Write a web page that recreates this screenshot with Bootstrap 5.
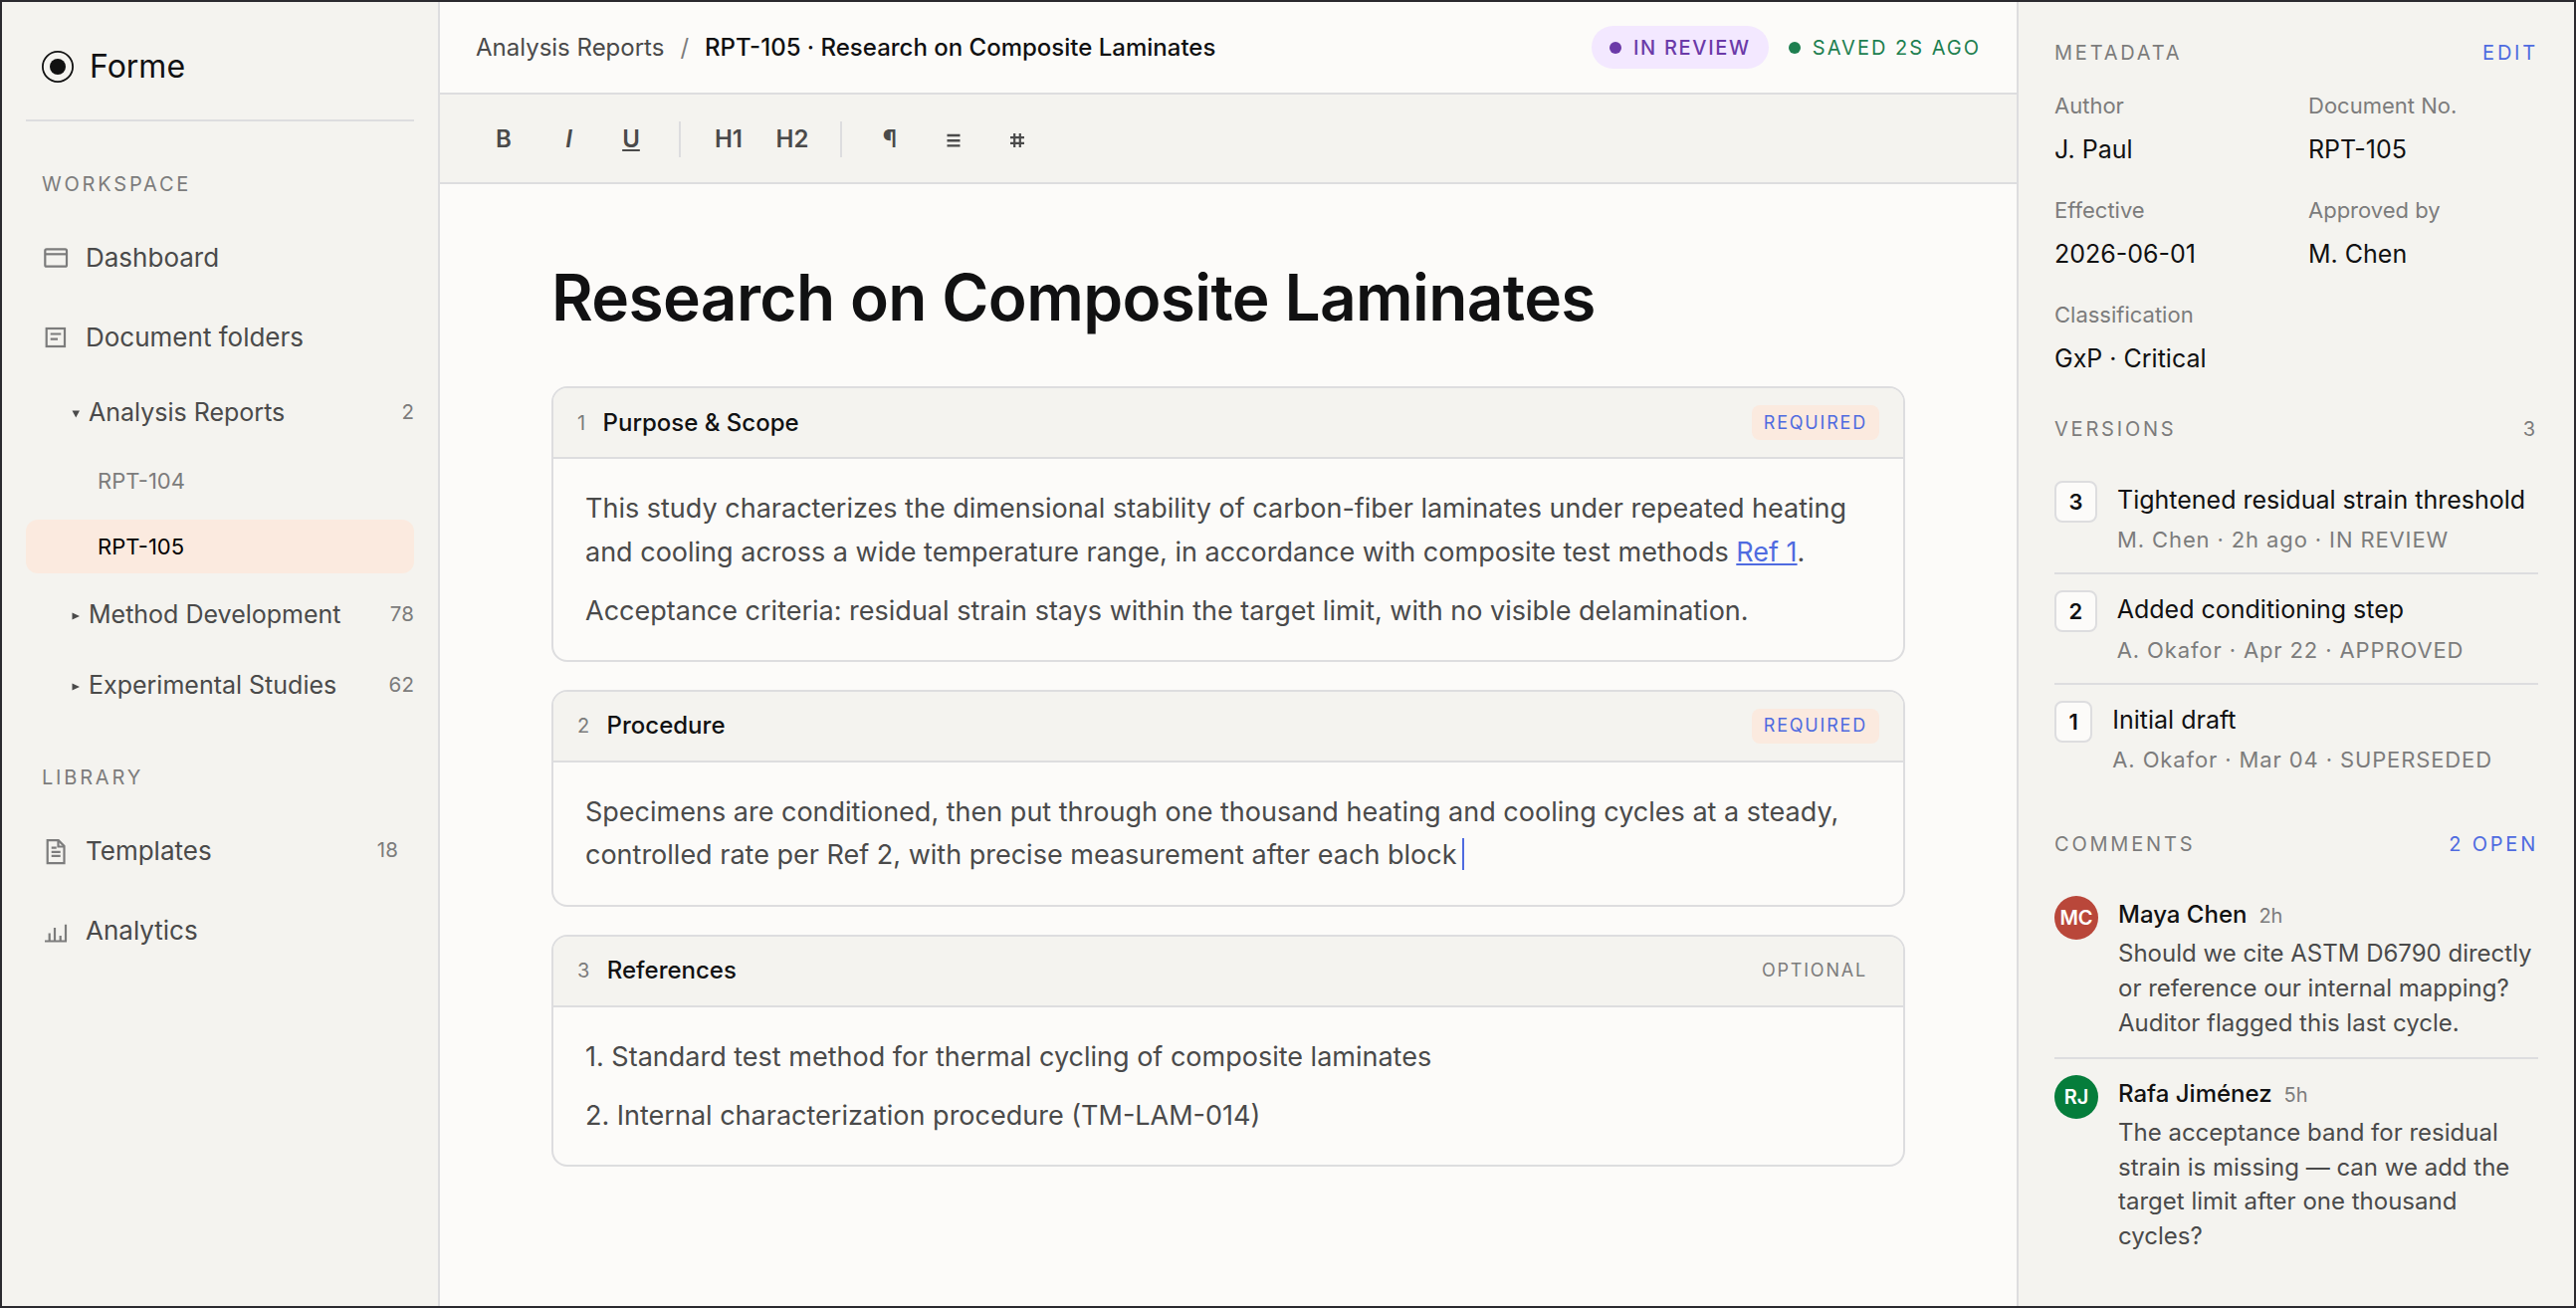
<!DOCTYPE html>
<html lang="en">
<head>
<meta charset="utf-8">
<title>Forme</title>
<link rel="stylesheet" href="https://cdn.jsdelivr.net/npm/bootstrap@5.3.0/dist/css/bootstrap.min.css">
<style>
:root{--panel:#f4f3ef;--paper:#fcfbf9;--rule:#dddddf;--ink:#111112;--body:#4a4a4a;--muted:#7c7c7c;--blue:#4f6be0;--peach:#fbeadf}
html,body{height:100%}
body{font-family:Inter,"Liberation Sans",sans-serif;font-size:24px;line-height:1;color:var(--ink);background:var(--panel);overflow:hidden}
.frame{height:1314px;border:2px solid #2b2a2f}
.dim{color:var(--muted)}.blue{color:var(--blue)}
.cap{font-size:20px;letter-spacing:2.8px;color:var(--muted)}
/* sidebar */
.side{width:440px;padding:0 24px;background:var(--panel);border-right:2px solid var(--rule);color:var(--body)}
.brand{height:120px;padding:12px 16px 0;gap:16px;font-size:32px;color:var(--ink);border-bottom:2px solid var(--rule)}
.side .cap{padding-left:16px;height:40px;margin:43px 0 14px}
.side .cap.lib{margin-top:37px}
.item{height:80px;padding:0 16px;gap:16px;font-size:26px}
.item svg{color:var(--muted)}
.cnt{font-size:20.5px;letter-spacing:.1px;color:var(--muted)}
.folder{height:71px;padding-left:46px;font-size:25px;gap:5px}
.folder svg{width:12px;height:12px;margin-top:3px}
.leaves{padding:6px 0 5.5px;gap:12px}
.leaf{height:54px;padding-left:72px;font-size:22px;color:var(--muted);border-radius:12px}
.leaf.on{background:var(--peach);color:#000}
/* editor */
.centre{background:var(--paper)}
.topbar{height:93px;padding:0 36px;border-bottom:2px solid var(--rule)}
.crumb{color:var(--body)}
.slash{margin:0 16px;color:var(--muted)}
.medium{font-weight:500}
.stat{font-size:20px;letter-spacing:1.7px;gap:12px}
.pill{height:43px;border-radius:22px;background:#f3e8ff;color:#6b3aa8;padding:0 18px;font-weight:500}
.saved{color:#1e7f50;margin-left:20px;letter-spacing:2px}
.dot{width:12px;height:12px;border-radius:50%;background:currentColor}
.tools{height:90px;padding:1px 32px 0;background:var(--panel);border-bottom:2px solid var(--rule);font-weight:600;color:var(--body)}
.tools .tb{width:64px;text-align:center}
.tools .tb em{padding-left:3px}
.tools .sep{width:2px;height:36px;background:var(--rule)}
.sheet{width:1360px;margin:0 auto;padding-top:74px}
.sheet h1{font-size:64px;font-weight:600;line-height:80px;letter-spacing:-.64px;margin:0 0 49px}
.block{border:2px solid var(--rule);border-radius:16px;margin-bottom:28px;overflow:hidden}
.block-h{height:71px;background:var(--panel);border-bottom:2px solid var(--rule);padding:0 24px}
.block-h .cap{letter-spacing:1.4px}
.tag{height:35px;padding:0 12px;border-radius:8px;font-size:18px;letter-spacing:1.8px}
.tag.req{background:var(--peach);color:var(--blue)}
.block-b{padding:28px 32px 27.8px;font-size:27px;line-height:43.5px;color:var(--body)}
.block-b p{margin:0 0 15.5px}.block-b p:last-child{margin:0}
.block-b a{color:var(--blue)}
.caret{display:inline-block;width:2px;height:32px;background:var(--blue);vertical-align:-6px;margin-left:6px}
/* inspector */
.insp{width:560px;padding:0 36px;background:var(--panel);border-left:2px solid var(--rule)}
.h-meta{height:82px;padding:30px 0 10px}
.h-ver{height:64px;margin-bottom:4px}
.h-com{height:72px;margin-top:16.5px}
.meta{display:grid;grid-template-columns:1fr 1fr;column-gap:24px}
.meta>div{height:105px}
.meta span{display:block;font-size:22px;line-height:44px;color:var(--muted)}
.meta strong{display:block;font-size:25px;font-weight:400;line-height:45px}
.ver{padding:16px 0;gap:20px;border-bottom:2px solid var(--rule)}
.ver:last-child,.note:last-child{border:0}
.num{height:42px;padding:0 12.5px;border:2px solid var(--rule);border-radius:8px;background:var(--paper);font-size:22px;font-weight:600}
.vt{font-size:25px;line-height:38.3px}
.vm{line-height:34px;margin-top:4px;font-size:22px;letter-spacing:.88px;color:var(--muted)}
.note{padding:16px 0;gap:20px;border-bottom:2px solid var(--rule)}
.ava{width:44px;height:44px;border-radius:50%;color:#fff;font-size:20px;font-weight:600}
.ava.mc{background:#b9473a}.ava.rj{background:#057d3b}
.who{height:37px;gap:12px;line-height:37px}
.who small{font-size:20px;color:var(--muted)}
.say{line-height:34.8px;margin-top:4px;color:var(--body)}
</style>
</head>
<body>
<div class="frame d-flex">
  <nav class="side d-flex flex-column flex-shrink-0">
    <div class="brand d-flex align-items-center">
      <svg width="32" height="32" viewBox="0 0 32 32"><circle cx="16" cy="16" r="15.1" fill="none" stroke="#111" stroke-width="1.8"/><circle cx="16" cy="16" r="8" fill="#111"/></svg>
      <span>Forme</span>
    </div>
    <div class="cap d-flex align-items-center">WORKSPACE</div>
    <div class="item d-flex align-items-center">
      <svg width="28" height="28" viewBox="0 0 28 28" fill="none" stroke="currentColor" stroke-width="2.2"><rect x="3.300" y="5.300" width="21.700" height="17.400" rx="1.500"/><path d="M3.300 10.300h21.700"/></svg>
      <span>Dashboard</span></div>
    <div class="item d-flex align-items-center">
      <svg width="28" height="28" viewBox="0 0 28 28" fill="none" stroke="currentColor" stroke-width="2.2"><rect x="4.700" y="5" width="18.300" height="18"/><path d="M8.700 10.500h10.600M8.700 15.700h7.300"/></svg>
      <span>Document folders</span></div>
    <div class="folder d-flex align-items-center"><svg viewBox="0 0 12 12"><path d="M.5 2.500h7.500L4.250 9.500z" fill="currentColor"/></svg><span>Analysis Reports</span><span class="cnt ms-auto">2</span></div>
    <div class="leaves d-flex flex-column">
      <div class="leaf d-flex align-items-center">RPT-104</div>
      <div class="leaf on d-flex align-items-center">RPT-105</div>
    </div>
    <div class="folder d-flex align-items-center"><svg viewBox="0 0 12 12"><path d="M.5 2.500v7L8 6z" fill="currentColor"/></svg><span>Method Development</span><span class="cnt ms-auto">78</span></div>
    <div class="folder d-flex align-items-center"><svg viewBox="0 0 12 12"><path d="M.5 2.500v7L8 6z" fill="currentColor"/></svg><span>Experimental Studies</span><span class="cnt ms-auto">62</span></div>
    <div class="cap lib d-flex align-items-center">LIBRARY</div>
    <div class="item d-flex align-items-center">
      <svg width="28" height="28" viewBox="0 0 28 28" fill="none" stroke="currentColor" stroke-width="2.2"><path d="M5.700 3.200h11l5.800 5.800v17.200H5.700z"/><path d="M16.500 3.500v6h6M9.700 10.700h5M9.700 14.800h9M9.700 18.800h9"/></svg>
      <span>Templates</span><span class="cnt ms-auto">18</span></div>
    <div class="item d-flex align-items-center">
      <svg width="28" height="28" viewBox="0 0 28 28" fill="none" stroke="currentColor" stroke-width="2.2"><path d="M3 24.500h22M7.700 24.500v-8M13 24.500V11M18.700 24.500V19M24 24.500V7.700"/></svg>
      <span>Analytics</span></div>
  </nav>

  <main class="centre flex-grow-1">
    <div class="topbar d-flex align-items-center">
      <span class="crumb">Analysis Reports</span><span class="slash">/</span><span class="medium">RPT-105 · Research on Composite Laminates</span>
      <span class="pill stat d-flex align-items-center ms-auto"><i class="dot"></i>IN REVIEW</span>
      <span class="saved stat d-flex align-items-center"><i class="dot"></i>SAVED 2S AGO</span>
    </div>
    <div class="tools d-flex align-items-center">
      <span class="tb">B</span><span class="tb"><em>I</em></span><span class="tb"><u>U</u></span><i class="sep mx-3"></i>
      <span class="tb">H1</span><span class="tb">H2</span><i class="sep mx-3"></i>
      <span class="tb">¶</span>
      <span class="tb d-flex justify-content-center"><svg width="16" height="20" viewBox="0 0 16 20" stroke="currentColor" stroke-width="2.400"><path d="M1.500 6h13M1.500 11.200h13M1.500 16.400h13"/></svg></span>
      <span class="tb d-flex justify-content-center"><svg width="16" height="20" viewBox="0 0 16 20" stroke="currentColor" stroke-width="2.200"><path d="M1 8.200h14M1 13.800h14M5.200 4v14M10.800 4v14"/></svg></span>
    </div>
    <div class="sheet">
      <h1>Research on Composite Laminates</h1>
      <section class="block">
        <div class="block-h d-flex align-items-center"><span class="cap me-3">1</span><span class="medium">Purpose &amp; Scope</span><span class="tag req d-flex align-items-center ms-auto">REQUIRED</span></div>
        <div class="block-b"><p>This study characterizes the dimensional stability of carbon-fiber laminates under repeated heating<br>and cooling across a wide temperature range, in accordance with composite test methods <a href="#">Ref 1</a>.</p>
        <p>Acceptance criteria: residual strain stays within the target limit, with no visible delamination.</p></div>
      </section>
      <section class="block">
        <div class="block-h d-flex align-items-center"><span class="cap me-3">2</span><span class="medium">Procedure</span><span class="tag req d-flex align-items-center ms-auto">REQUIRED</span></div>
        <div class="block-b"><p>Specimens are conditioned, then put through one thousand heating and cooling cycles at a steady,<br>controlled rate per Ref 2, with precise measurement after each block<span class="caret"></span></p></div>
      </section>
      <section class="block">
        <div class="block-h d-flex align-items-center"><span class="cap me-3">3</span><span class="medium">References</span><span class="tag dim d-flex align-items-center ms-auto">OPTIONAL</span></div>
        <div class="block-b"><p>1. Standard test method for thermal cycling of composite laminates</p><p>2. Internal characterization procedure (TM-LAM-014)</p></div>
      </section>
    </div>
  </main>

  <aside class="insp flex-shrink-0">
    <div class="cap h-meta d-flex align-items-center justify-content-between"><span>METADATA</span><span class="blue">EDIT</span></div>
    <div class="meta">
      <div><span>Author</span><strong>J. Paul</strong></div>
      <div><span>Document No.</span><strong>RPT-105</strong></div>
      <div><span>Effective</span><strong>2026-06-01</strong></div>
      <div><span>Approved by</span><strong>M. Chen</strong></div>
      <div><span>Classification</span><strong>GxP · Critical</strong></div>
    </div>
    <div class="cap h-ver d-flex align-items-center justify-content-between"><span>VERSIONS</span><span>3</span></div>
    <div>
      <div class="ver d-flex align-items-start"><span class="num d-flex align-items-center">3</span><div><div class="vt">Tightened residual strain threshold</div><div class="vm">M. Chen · 2h ago · IN REVIEW</div></div></div>
      <div class="ver d-flex align-items-start"><span class="num d-flex align-items-center">2</span><div><div class="vt">Added conditioning step</div><div class="vm">A. Okafor · Apr 22 · APPROVED</div></div></div>
      <div class="ver d-flex align-items-start"><span class="num d-flex align-items-center">1</span><div><div class="vt">Initial draft</div><div class="vm">A. Okafor · Mar 04 · SUPERSEDED</div></div></div>
    </div>
    <div class="cap h-com d-flex align-items-center justify-content-between"><span>COMMENTS</span><span class="blue">2 OPEN</span></div>
    <div>
      <div class="note d-flex align-items-start"><span class="ava mc d-flex align-items-center justify-content-center flex-shrink-0">MC</span><div><div class="who d-flex align-items-baseline"><span class="medium">Maya Chen</span><small>2h</small></div><div class="say">Should we cite ASTM D6790 directly<br>or reference our internal mapping?<br>Auditor flagged this last cycle.</div></div></div>
      <div class="note d-flex align-items-start"><span class="ava rj d-flex align-items-center justify-content-center flex-shrink-0">RJ</span><div><div class="who d-flex align-items-baseline"><span class="medium">Rafa Jiménez</span><small>5h</small></div><div class="say">The acceptance band for residual<br>strain is missing — can we add the<br>target limit after one thousand<br>cycles?</div></div></div>
    </div>
  </aside>
</div>
<script src="https://cdn.jsdelivr.net/npm/bootstrap@5.3.0/dist/js/bootstrap.bundle.min.js"></script>
</body>
</html>
